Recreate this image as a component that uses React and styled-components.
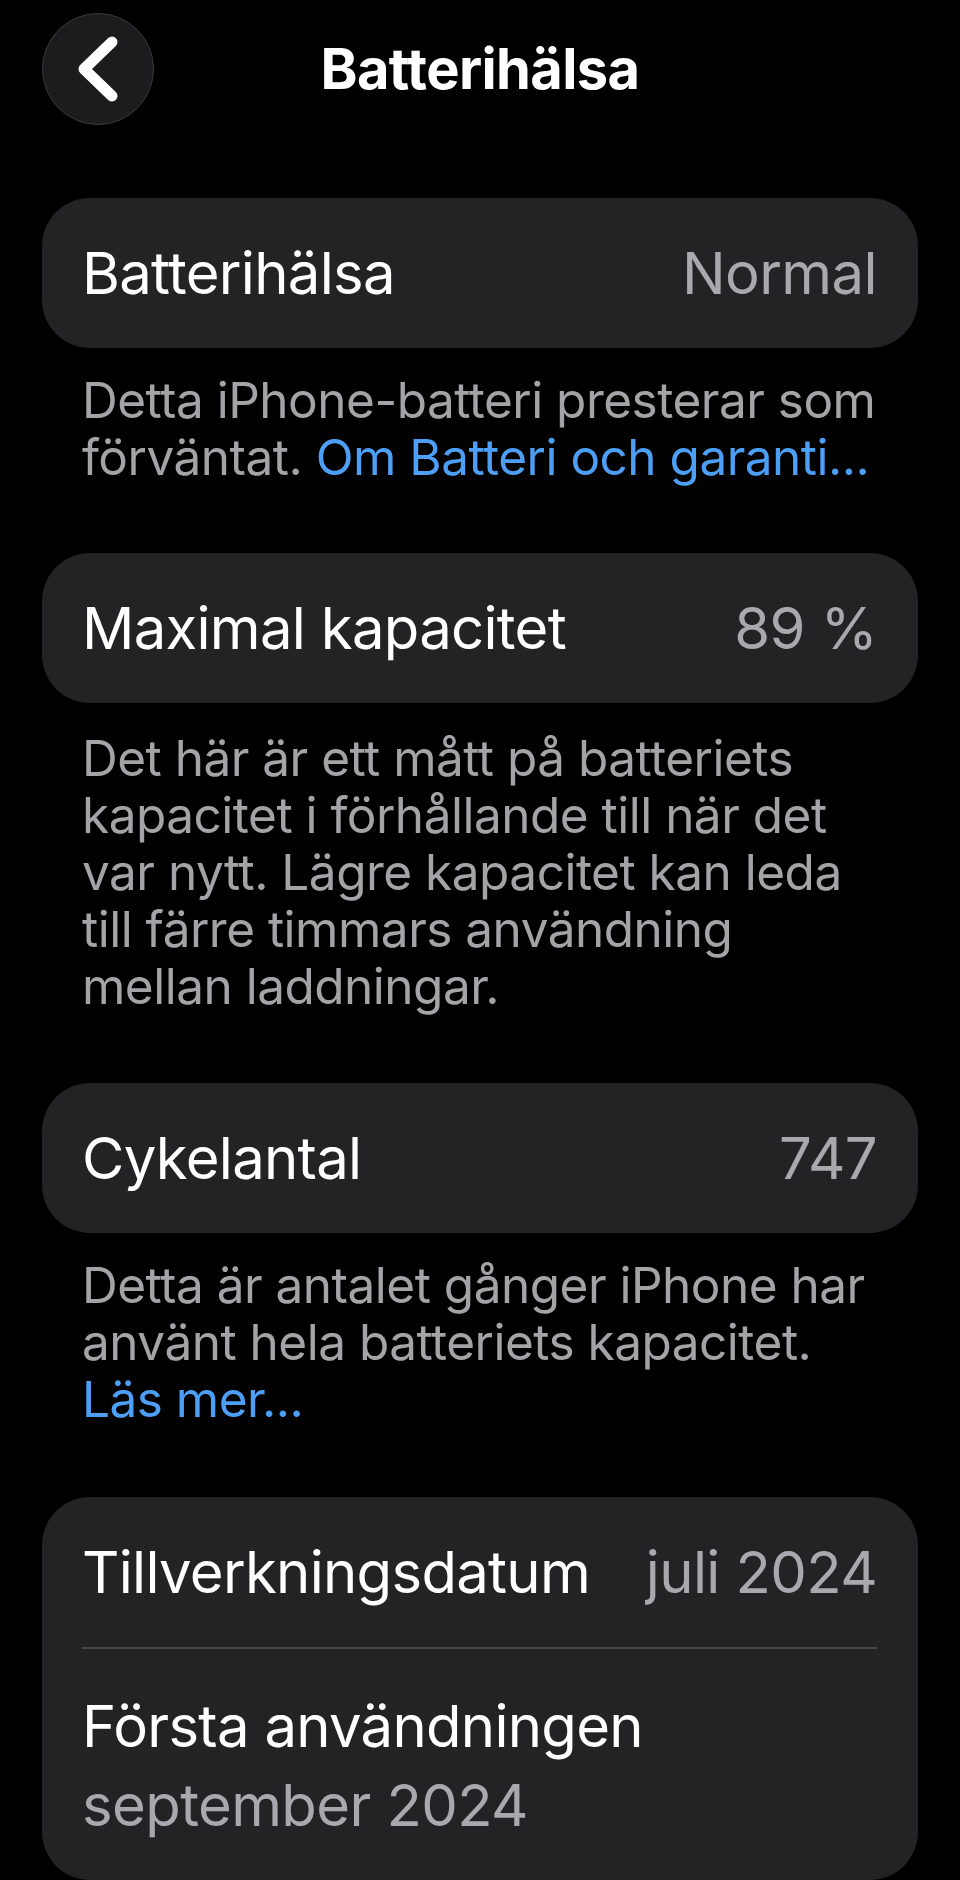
import React from 'react'
import styled, { createGlobalStyle } from 'styled-components'

const Global = createGlobalStyle`
  html, body { margin: 0; padding: 0; background: #000; }
  body { font-family: Inter, "Noto Sans", "Liberation Sans", sans-serif; color: #fff; }
`

const Page = styled.div`
  width: 960px; min-height: 1880px; box-sizing: border-box;
  padding: 13px 42px 0; background: #000;
`
const Header = styled.header`
  display: grid; grid-template-columns: 112px 1fr 112px; align-items: center;
  height: 112px; margin-bottom: 73px;
`
const BackButton = styled.button`
  width: 112px; height: 112px; border-radius: 50%; padding: 0;
  background: #1c1c1e; border: 1.5px solid #3a3a3c;
  display: flex; align-items: center; justify-content: center; cursor: pointer;
`
const Title = styled.h1`
  margin: 0; text-align: center; font-size: 56px; font-weight: 700;
  letter-spacing: -0.6px; color: #fff;
`
const Card = styled.div`
  background: #232325; border-radius: 48px; overflow: hidden;
`
const Row = styled.div`
  display: flex; align-items: center; justify-content: space-between; gap: 24px;
  height: 150px; box-sizing: border-box; padding: 0 41px 0 40px;
`
const StackRow = styled.div`
  display: flex; flex-direction: column; gap: 13px;
  padding: 44px 40px 42px;
`
const Divider = styled.div`
  height: 2px; margin-left: 40px; margin-right: 41px; background: #48484a;
`
const Label = styled.span`
  font-size: 58px; line-height: 66px; color: #fff; letter-spacing: -0.7px;
  white-space: nowrap;
`
const Value = styled.span`
  font-size: 58px; line-height: 66px; color: #a8a8ae; letter-spacing: -0.6px;
  white-space: nowrap;
`
const Note = styled.p`
  margin: ${({ $top }) => $top}px 0 ${({ $bottom }) => $bottom}px;
  padding: 0 36px 0 40px;
  font-size: 49.5px; line-height: 57px; color: #a3a3a8; letter-spacing: -0.5px;
`
const Link = styled.a`
  color: #4c9ff5; text-decoration: none;
`

function Chevron() {
  return (
    <svg width="44" height="70" viewBox="0 0 44 70" fill="none">
      <path d="M36 8 L8 35 L36 62" stroke="#fff" strokeWidth="11" strokeLinecap="round" strokeLinejoin="round" />
    </svg>
  )
}

export default function App() {
  return (
    <>
      <Global />
      <Page>
        <Header>
          <BackButton aria-label="Tillbaka"><Chevron /></BackButton>
          <Title>Batterihälsa</Title>
          <span />
        </Header>

        <Card>
          <Row><Label>Batterihälsa</Label><Value>Normal</Value></Row>
        </Card>
        <Note $top={24} $bottom={67}>
          Detta iPhone-batteri presterar som förväntat. <Link href="#">Om Batteri och garanti...</Link>
        </Note>

        <Card>
          <Row><Label>Maximal kapacitet</Label><Value>89 %</Value></Row>
        </Card>
        <Note $top={27} $bottom={68}>
          Det här är ett mått på batteriets kapacitet i förhållande till när det var nytt. Lägre kapacitet kan leda till färre timmars användning mellan laddningar.
        </Note>

        <Card>
          <Row><Label>Cykelantal</Label><Value>747</Value></Row>
        </Card>
        <Note $top={24} $bottom={69}>
          Detta är antalet gånger iPhone har använt hela batteriets kapacitet. <Link href="#">Läs mer...</Link>
        </Note>

        <Card>
          <Row><Label>Tillverkningsdatum</Label><Value>juli 2024</Value></Row>
          <Divider />
          <StackRow>
            <Label>Första användningen</Label>
            <Value>september 2024</Value>
          </StackRow>
        </Card>
      </Page>
    </>
  )
}
